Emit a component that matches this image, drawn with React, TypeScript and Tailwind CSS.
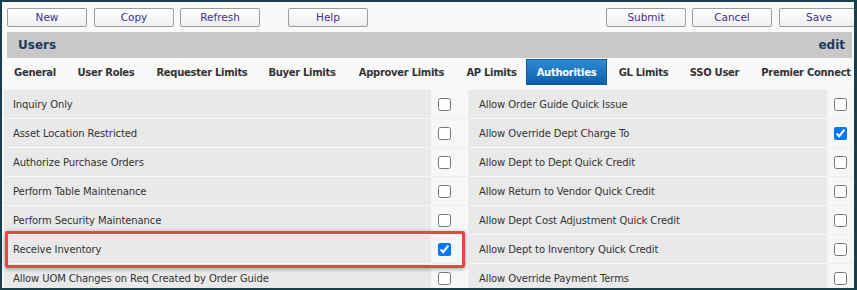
import React from 'react';

const font = { fontFamily: '"DejaVu Sans", Verdana, sans-serif' };

const leftRows = [
  { label: 'Inquiry Only', checked: false },
  { label: 'Asset Location Restricted', checked: false },
  { label: 'Authorize Purchase Orders', checked: false },
  { label: 'Perform Table Maintenance', checked: false },
  { label: 'Perform Security Maintenance', checked: false },
  { label: 'Receive Inventory', checked: true },
  { label: 'Allow UOM Changes on Req Created by Order Guide', checked: false },
];

const rightRows = [
  { label: 'Allow Order Guide Quick Issue', checked: false },
  { label: 'Allow Override Dept Charge To', checked: true },
  { label: 'Allow Dept to Dept Quick Credit', checked: false },
  { label: 'Allow Return to Vendor Quick Credit', checked: false },
  { label: 'Allow Dept Cost Adjustment Quick Credit', checked: false },
  { label: 'Allow Dept to Inventory Quick Credit', checked: false },
  { label: 'Allow Override Payment Terms', checked: false },
];

const tabs = [
  { name: 'General', w: 'w-[62px]' },
  { name: 'User Roles', w: 'w-[80px]' },
  { name: 'Requester Limits', w: 'w-[112px]' },
  { name: 'Buyer Limits', w: 'w-[88px]' },
  { name: 'Approver Limits', w: 'w-[111px]' },
  { name: 'AP Limits', w: 'w-[69px]' },
  { name: 'Authorities', w: 'w-[81px]', active: true },
  { name: 'GL Limits', w: 'w-[73px]' },
  { name: 'SSO User', w: 'w-[69px]' },
  { name: 'Premier Connect', w: 'w-[114px]' },
];

const ToolButton = ({ label, className = '' }: { label: string; className?: string }) => (
  <button
    type="button"
    className={`h-[19px] w-[80px] shrink-0 rounded-[2px] border border-[#9c9c9c] bg-gradient-to-b from-white to-[#efefef] text-[10.5px] leading-none text-[#3d2f96] ${className}`}
  >
    {label}
  </button>
);

const Check = ({ checked }: { checked: boolean }) => (
  <input type="checkbox" readOnly checked={checked} className="m-0 h-[13px] w-[13px]" />
);

export default function App() {
  return (
    <div
      className="relative h-[290px] w-[857px] overflow-hidden border-t-2 border-b-2 border-l-2 border-r-[3px] border-[#17404f] bg-[#f9f9f9] text-[#333]"
      style={font}
    >
      {/* toolbar */}
      <div className="flex h-[30px] items-center overflow-hidden whitespace-nowrap pl-[5px] pt-[1px]">
        <ToolButton label="New" />
        <ToolButton label="Copy" className="ml-[7px]" />
        <ToolButton label="Refresh" className="ml-[6px]" />
        <ToolButton label="Help" className="ml-[28px]" />
        <ToolButton label="Submit" className="ml-[238px]" />
        <ToolButton label="Cancel" className="ml-[6px]" />
        <ToolButton label="Save" className="ml-[7px]" />
      </div>

      {/* title bar */}
      <div className="ml-[5px] mr-[2px] flex h-[26px] items-center justify-between bg-[#c8c8c8] pl-[11px] pr-[7px] text-[12px] font-bold text-[#1c3a5c]">
        <span>Users</span>
        <span>edit</span>
      </div>

      {/* tabs */}
      <div className="flex h-[31px] overflow-hidden whitespace-nowrap pl-[2px] pt-[1px]">
        {tabs.map((t) => (
          <div
            key={t.name}
            className={`flex h-[26px] shrink-0 items-center justify-center text-[10px] font-bold tracking-[-0.3px] ${t.w} ${
              t.active
                ? 'border border-[#0f5c9c] bg-gradient-to-b from-[#2f8bd6] to-[#0c60aa] text-white'
                : 'text-[#333]'
            }`}
          >
            {t.name}
          </div>
        ))}
      </div>

      {/* authorities grid */}
      <div className="ml-[2px] grid grid-cols-[428px_37px_359px_40px] border-t border-[#f4f4f4] text-[10px] tracking-[-0.1px]">
        {leftRows.map((row, i) => (
          <React.Fragment key={row.label}>
            <div className="flex h-[29px] items-center whitespace-nowrap border-b border-r border-[#f6f6f6] bg-[#e9e9e9] pl-[9px]">
              {row.label}
            </div>
            <div className="flex h-[29px] items-center border-b border-r border-[#efefef] bg-[#f7f7f7] pl-[6px]">
              <Check checked={row.checked} />
            </div>
            <div className="flex h-[29px] items-center whitespace-nowrap border-b border-r border-[#f6f6f6] bg-[#e9e9e9] pl-[10px]">
              {rightRows[i].label}
            </div>
            <div className="flex h-[29px] items-center border-b border-[#efefef] bg-[#f7f7f7] pl-[6px]">
              <Check checked={rightRows[i].checked} />
            </div>
          </React.Fragment>
        ))}
      </div>

      {/* highlight around Receive Inventory */}
      <div className="pointer-events-none absolute left-[3px] top-[229px] h-[37px] w-[460px] rounded-[2px] border-[3px] border-[#ec4345] shadow-[0_1px_4px_rgba(0,0,0,0.35)]" />
    </div>
  );
}
